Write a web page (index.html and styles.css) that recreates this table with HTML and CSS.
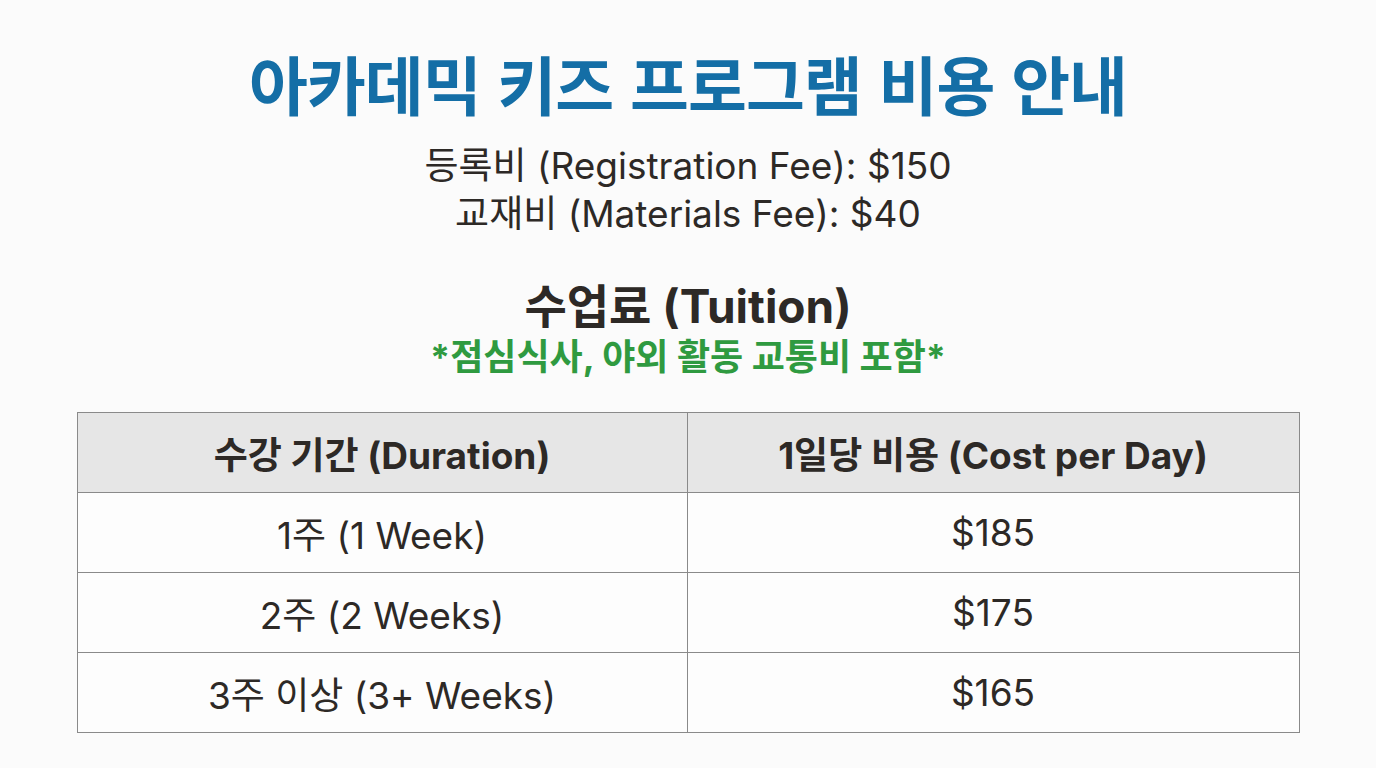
FILE: index.html
```html
<!DOCTYPE html>
<html lang="ko">
<head>
<meta charset="utf-8">
<link rel="stylesheet" href="styles.css">
</head>
<body>
<main class="page">
  <h1 class="title">아카데믹 키즈 프로그램 비용 안내</h1>
  <div class="fees">
    <p>등록비 (Registration Fee): $150</p>
    <p>교재비 (Materials Fee): $40</p>
  </div>
  <h2 class="tuition">수업료 (Tuition)</h2>
  <p class="note">*점심식사, 야외 활동 교통비 포함*</p>
  <table class="price">
    <thead>
      <tr><th>수강 기간 (Duration)</th><th>1일당 비용 (Cost per Day)</th></tr>
    </thead>
    <tbody>
      <tr><td>1주 (1 Week)</td><td>$185</td></tr>
      <tr><td>2주 (2 Weeks)</td><td>$175</td></tr>
      <tr><td>3주 이상 (3+ Weeks)</td><td>$165</td></tr>
    </tbody>
  </table>
</main>
</body>
</html>
```

FILE: styles.css
```css
* { box-sizing: border-box; }
html, body { margin: 0; padding: 0; }
body {
  background: #fbfbfb;
  font-family: "Inter", "Noto Sans CJK KR", sans-serif;
  color: #2d2926;
  width: 1376px;
  height: 768px;
  overflow: hidden;
}
.page {
  display: flex;
  flex-direction: column;
  align-items: center;
  padding-top: 40px;
}
.title {
  margin: 0;
  font-family: "Noto Sans CJK KR", sans-serif;
  font-size: 64px;
  line-height: 84px;
  font-weight: 700;
  color: #146ea6;
  letter-spacing: -1px;
}
.fees {
  margin-top: 18px;
  text-align: center;
}
.fees p {
  margin: 0;
  font-size: 37px;
  line-height: 48px;
  font-weight: 400;
}
.tuition {
  margin: 42px 0 0;
  font-size: 46px;
  line-height: 52px;
  font-weight: 700;
}
.note {
  margin: 5px 0 0;
  font-size: 36px;
  line-height: 40px;
  font-weight: 700;
  color: #2f9a40;
}
.price {
  margin-top: 35px;
  width: 1223px;
  border-collapse: collapse;
  table-layout: fixed;
}
.price th, .price td {
  border: 1.5px solid #8a8a8a;
  height: 80px;
  text-align: center;
  font-size: 37px;
  padding: 0;
}
.price th {
  background: #e6e6e6;
  font-weight: 700;
}
.price td { font-weight: 400; background: #fdfdfd; }
.price th:first-child, .price td:first-child { width: 610px; }
```
